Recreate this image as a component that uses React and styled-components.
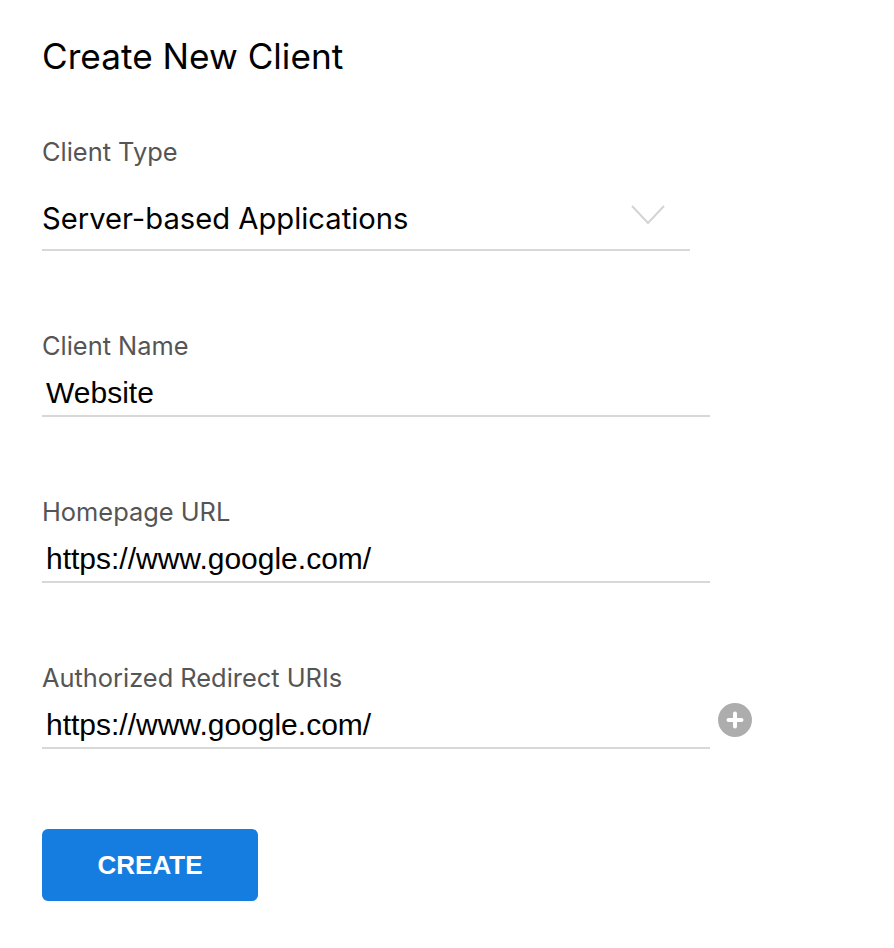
import React from 'react';
import styled, { createGlobalStyle } from 'styled-components';

const Global = createGlobalStyle`
  html, body { margin: 0; padding: 0; background: #fff; }
`;

const Page = styled.main`
  width: 894px;
  height: 948px;
  box-sizing: border-box;
  padding: 32px 0 0 42px;
  font-family: Inter, "Noto Sans", sans-serif;
  overflow: hidden;
`;

const Title = styled.h1`
  margin: 0 0 56px;
  font-size: 35.2px;
  line-height: 48px;
  font-weight: 400;
  color: #000;
`;

const Field = styled.section`
  margin-bottom: ${p => p.$gap}px;
`;

const Label = styled.div`
  font-size: 25.4px;
  line-height: 32px;
  color: #555;
`;

const SelectRow = styled.div`
  width: 648px;
  height: 83px;
  box-sizing: border-box;
  border-bottom: 2px solid #d8d8d8;
  display: flex;
  align-items: flex-start;
  justify-content: space-between;
  padding: 33px 24px 0 0;
`;

const SelectValue = styled.span`
  font-size: 29.2px;
  line-height: 36px;
  color: #000;
`;

const Chevron = styled.svg`
  width: 36px;
  height: 22px;
  margin-top: 2px;
`;

const InputRow = styled.div`
  display: flex;
  align-items: flex-start;
  gap: 8px;
`;

const Input = styled.div`
  width: 668px;
  height: 55px;
  box-sizing: border-box;
  border-bottom: 2px solid #d8d8d8;
  padding: 12px 0 0 4px;
  font-family: "Liberation Sans", Arial, sans-serif;
  font-size: 30px;
  line-height: 38px;
  color: #000;
`;

const AddButton = styled.button`
  width: 34px;
  height: 34px;
  margin-top: 9px;
  padding: 0;
  border: 0;
  border-radius: 50%;
  background: #adadad;
  display: flex;
  align-items: center;
  justify-content: center;
`;

const Submit = styled.button`
  width: 216px;
  height: 72px;
  border: 0;
  border-radius: 6px;
  background: #167de0;
  color: #fff;
  font-family: "Liberation Sans", Arial, sans-serif;
  font-size: 26px;
  font-weight: 700;
  padding: 0;
`;

export default function App() {
  return (
    <Page>
      <Global />
      <Title>Create New Client</Title>
      <Field $gap={79}>
        <Label>Client Type</Label>
        <SelectRow>
          <SelectValue>Server-based Applications</SelectValue>
          <Chevron viewBox="0 0 36 22" fill="none" stroke="#d4d4d4" strokeWidth="2">
            <path d="M2 3 L18 20 L34 3" />
          </Chevron>
        </SelectRow>
      </Field>
      <Field $gap={79}>
        <Label>Client Name</Label>
        <InputRow><Input>Website</Input></InputRow>
      </Field>
      <Field $gap={79}>
        <Label>Homepage URL</Label>
        <InputRow><Input>https://www.google.com/</Input></InputRow>
      </Field>
      <Field $gap={80}>
        <Label>Authorized Redirect URIs</Label>
        <InputRow>
          <Input>https://www.google.com/</Input>
          <AddButton aria-label="Add URI">
            <svg width="18" height="18" viewBox="0 0 18 18" fill="none" stroke="#fff" strokeWidth="4" strokeLinecap="round">
              <path d="M9 2.5V15.5M2.5 9H15.5" />
            </svg>
          </AddButton>
        </InputRow>
      </Field>
      <Submit>CREATE</Submit>
    </Page>
  );
}
